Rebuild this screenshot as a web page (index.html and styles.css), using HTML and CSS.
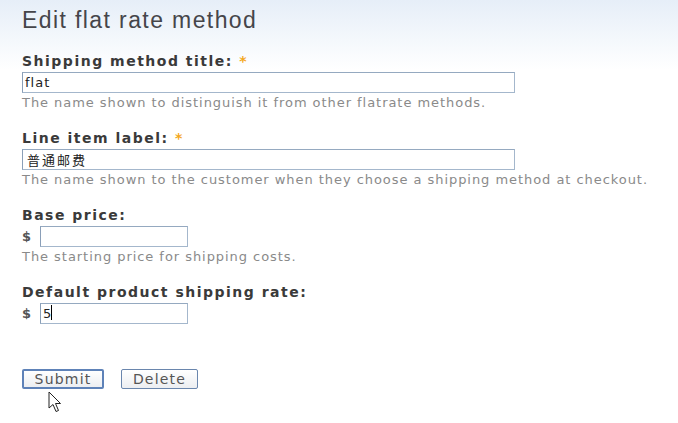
FILE: index.html
```html
<!DOCTYPE html>
<html>
<head>
<meta charset="utf-8">
<link rel="stylesheet" href="styles.css">
</head>
<body>
<div class="page">
  <h1 class="title">Edit flat rate method</h1>
  <form class="form">
    <div class="field">
      <label class="label">Shipping method title: <span class="req">*</span></label>
      <div class="input wide">flat</div>
      <div class="desc">The name shown to distinguish it from other flatrate methods.</div>
    </div>
    <div class="field">
      <label class="label">Line item label: <span class="req">*</span></label>
      <div class="input wide cjk">普通邮费</div>
      <div class="desc">The name shown to the customer when they choose a shipping method at checkout.</div>
    </div>
    <div class="field">
      <label class="label">Base price:</label>
      <div class="price-row"><span class="cur">$</span><div class="input short"></div></div>
      <div class="desc">The starting price for shipping costs.</div>
    </div>
    <div class="field">
      <label class="label">Default product shipping rate:</label>
      <div class="price-row"><span class="cur">$</span><div class="input short">5<span class="caret"></span></div></div>
    </div>
    <div class="actions">
      <button type="button" class="btn btn-submit">Submit</button>
      <button type="button" class="btn">Delete</button>
      <svg class="cursor" width="16" height="24" viewBox="0 0 16 24">
        <path d="M1 1 L1 17 L5 13.5 L8 20.5 L10.5 19.5 L7.5 12.5 L12.5 12.5 Z" fill="#fff" stroke="#222" stroke-width="1"/>
      </svg>
    </div>
  </form>
</div>
</body>
</html>
```

FILE: styles.css
```css
html, body {
  margin: 0;
  padding: 0;
}
body {
  width: 678px;
  height: 423px;
  overflow: hidden;
  background: linear-gradient(to bottom, #e6eef8 0px, #f4f8fc 40px, #ffffff 70px, #ffffff 100%);
  font-family: "DejaVu Sans", Verdana, sans-serif;
}
.page {
  padding: 7px 0 0 22px;
}
.title {
  margin: 0;
  font-family: "Liberation Sans", Arial, sans-serif;
  font-weight: normal;
  font-size: 23px;
  letter-spacing: 1.4px;
  line-height: 26px;
  color: #45454a;
}
.form {
  margin-top: 21px;
}
.field {
  margin-bottom: 21px;
}
.label {
  display: block;
  font-weight: bold;
  font-size: 14px;
  line-height: 14px;
  color: #3a3a3a;
  letter-spacing: 1.5px;
  margin-bottom: 4px;
}
.req {
  color: #f4a81d;
}
.input {
  box-sizing: border-box;
  height: 21px;
  border: 1px solid #a4b7cc;
  border-left-color: #8a9fb8;
  border-top-color: #95a9c0;
  background: #fff;
  font-size: 13px;
  letter-spacing: 1px;
  line-height: 19px;
  padding: 0 2px;
  color: #222;
  position: relative;
}
.wide {
  width: 493px;
}
.cjk {
  font-family: "Noto Sans CJK SC", sans-serif;
  font-size: 13px;
  letter-spacing: 2px;
  padding-left: 4px;
}
.short {
  width: 148px;
}
.caret {
  display: inline-block;
  width: 1px;
  height: 15px;
  background: #000;
  vertical-align: -2px;
  margin-left: -1px;
}
.price-row {
  display: flex;
  align-items: center;
  gap: 8px;
}
.cur {
  font-size: 13px;
  font-weight: bold;
  color: #555;
  width: 10px;
}
.desc {
  margin-top: 2px;
  font-size: 13px;
  line-height: 15px;
  letter-spacing: 0.95px;
  color: #8a8a8a;
}
.actions {
  position: relative;
  margin-top: 45px;
  display: flex;
  gap: 17px;
}
.btn {
  height: 20px;
  padding: 0;
  border: 1px solid #6a86ad;
  border-radius: 2px;
  background: linear-gradient(to bottom, #ffffff, #eceef1);
  font-family: "DejaVu Sans", Verdana, sans-serif;
  font-size: 14px;
  line-height: 16px;
  color: #555;
  letter-spacing: 1.2px;
  width: 77px;
}
.btn-submit {
  width: 82px;
  border: 2px solid #5e82b8;
}
.cursor {
  position: absolute;
  left: 26px;
  top: 22px;
}
```
